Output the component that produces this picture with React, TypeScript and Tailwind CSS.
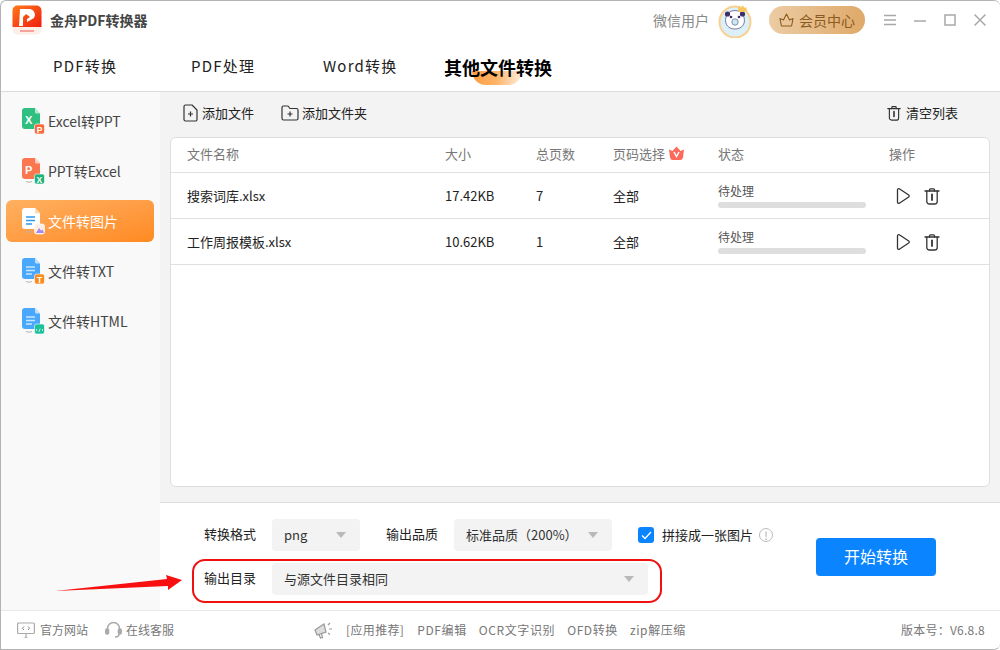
import React from "react";

const F = { fontFamily: '"Microsoft YaHei","Noto Sans CJK SC","Liberation Sans",sans-serif' };

function Logo() {
  return (
    <svg width="30" height="30" viewBox="0 0 30 30" className="shrink-0">
      <defs>
        <linearGradient id="lg" x1="0" y1="0" x2="1" y2="1">
          <stop offset="0" stopColor="#ff7a1a" />
          <stop offset="1" stopColor="#f01c10" />
        </linearGradient>
      </defs>
      <rect x="0.5" y="0.5" width="29" height="29" rx="5" fill="#fdeee8" />
      <path d="M0.5 5.5a5 5 0 0 1 5-5h19a5 5 0 0 1 5 5V22H0.5z" fill="url(#lg)" />
      <path d="M8 4h9a5.8 5.8 0 0 1 5 9l-7 4v-3l3-2-4-3-3 3v9H7z" fill="#fff" />
      <rect x="8" y="25" width="14" height="2" fill="#f4a49a" />
    </svg>
  );
}

function Avatar() {
  return (
    <svg width="36" height="36" viewBox="0 0 36 36" className="shrink-0">
      <circle cx="17" cy="20" r="15.5" fill="#dcf0fa" stroke="#fbcf8e" strokeWidth="2" />
      <path d="M8 15a9.5 9.5 0 0 1 18 0c2 8-3 12-9 12s-11-4-9-12z" fill="#fff" stroke="#5b5a8a" strokeWidth="0.8" />
      <circle cx="9.5" cy="12" r="2.6" fill="#3c2f6a" />
      <circle cx="24.5" cy="12" r="2.6" fill="#3c2f6a" />
      <circle cx="13" cy="15" r="1.3" fill="#3c2f6a" />
      <circle cx="21" cy="15" r="1.3" fill="#3c2f6a" />
      <circle cx="17" cy="20" r="3.2" fill="#cfe6f2" stroke="#6a7a9a" strokeWidth="0.8" />
      <path d="M20 7l1-3 2 2 2-3 1 3 2-1 1 3-3 2h-5z" fill="#f8c65a" />
    </svg>
  );
}

function DocBase({ color, children, shadow = true }: { color: string; children?: React.ReactNode; shadow?: boolean }) {
  return (
    <>
      <path d="M3 0h10l5 5.5V18a3 3 0 0 1-3 3H3a3 3 0 0 1-3-3V3a3 3 0 0 1 3-3z" fill={color} />
      <path d="M13 0l5 5.5h-3.5a1.5 1.5 0 0 1-1.5-1.5z" fill="#ffffff" fillOpacity="0.65" />
      {shadow && <path d="M4 23.5q3 1.5 6 0" stroke="#b5b5b5" strokeWidth="1" fill="none" />}
      {children}
    </>
  );
}

function Badge({ color, children }: { color: string; children?: React.ReactNode }) {
  return (
    <>
      <rect x="12.5" y="16" width="10" height="10" rx="2" fill={color} stroke="#fff" strokeWidth="0.6" />
      {children}
    </>
  );
}

function SideIcon({ kind }: { kind: number }) {
  const lines = (c: string) => (
    <path d={`M4 9h9M4 12.5h9M4 16h6`} stroke={c} strokeWidth="1.3" fill="none" />
  );
  return (
    <svg width="24" height="27" viewBox="0 0 24 27" className="shrink-0">
      {kind === 0 && (
        <>
          <DocBase color="#2fbf80" shadow={false}>
            <text x="3" y="15.5" fontSize="11" fontWeight="700" fill="#fff" fontFamily="Liberation Sans">X</text>
          </DocBase>
          <Badge color="#f9683a">
            <text x="14.7" y="24.6" fontSize="8.5" fontWeight="700" fill="#fff" fontFamily="Liberation Sans">P</text>
          </Badge>
        </>
      )}
      {kind === 1 && (
        <>
          <DocBase color="#fb774f">
            <text x="3" y="15.5" fontSize="11" fontWeight="700" fill="#fff" fontFamily="Liberation Sans">P</text>
          </DocBase>
          <Badge color="#1fb37c">
            <text x="14.6" y="24.6" fontSize="8.5" fontWeight="700" fill="#fff" fontFamily="Liberation Sans">X</text>
          </Badge>
        </>
      )}
      {kind === 2 && (
        <>
          <DocBase color="#ffffff">{lines("#2a9bf5")}</DocBase>
          <path d="M13 0l5 5.5h-3.5a1.5 1.5 0 0 1-1.5-1.5z" fill="#ffd9b0" />
          <Badge color="#fbeee6">
            <path d="M14 25l3-5 2 2.5 1.5-1 1.5 3.5z" fill="#a888ee" />
          </Badge>
        </>
      )}
      {kind === 3 && (
        <>
          <DocBase color="#49a8fb">{lines("#c9e5ff")}</DocBase>
          <Badge color="#f98b1f">
            <text x="14.9" y="24.6" fontSize="8.5" fontWeight="700" fill="#fff" fontFamily="Liberation Sans">T</text>
          </Badge>
        </>
      )}
      {kind === 4 && (
        <>
          <DocBase color="#49a8fb">{lines("#c9e5ff")}</DocBase>
          <Badge color="#1cc09b">
            <path d="M15 21l-1 1 1 1M20 21l1 1-1 1M18.2 20.5l-1.4 3.5" stroke="#fff" strokeWidth="0.7" fill="none" />
          </Badge>
        </>
      )}
    </svg>
  );
}

function Trash({ size = 18, color = "#333" }: { size?: number; color?: string }) {
  return (
    <svg width={size} height={size} viewBox="0 0 18 18" fill="none" stroke={color} strokeWidth="1.3" strokeLinecap="round" strokeLinejoin="round">
      <path d="M2 4h14" />
      <path d="M6.5 4V2.8a1 1 0 0 1 1-1h3a1 1 0 0 1 1 1V4" />
      <path d="M3.8 4v10.5a2.5 2.5 0 0 0 2.5 2.5h5.4a2.5 2.5 0 0 0 2.5-2.5V4" />
      <path d="M9 7.5v5.5" strokeWidth="1.8" />
    </svg>
  );
}

function Play() {
  return (
    <svg width="16" height="18" viewBox="0 0 16 18" fill="none" stroke="#333" strokeWidth="1.3" strokeLinejoin="round">
      <path d="M2.5 2.8c0-1 1-1.5 1.800-1l9.400 6.200c.7.500.7 1.500 0 2l-9.400 6.200c-.8.500-1.800 0-1.800-1z" />
    </svg>
  );
}

function Caret() {
  return <span className="w-0 h-0 border-l-[5px] border-r-[5px] border-t-[6px] border-l-transparent border-r-transparent border-t-[#b9b9b9]" />;
}

function Tab({ label, w, active }: { label: string; w: string; active?: boolean }) {
  return (
    <div className={`relative flex items-center pb-[3px] ${w}`}>
      {active && <span className="absolute left-[28px] top-[26px] w-[50px] h-[14px] rounded-b-full bg-gradient-to-r from-[#ff9c3e] via-[#ffb469] to-[#ffeedd]" />}
      <span className={active ? "relative text-[18px] font-bold text-black leading-none" : "text-[15px] text-[#222] tracking-[1.2px]"}>{label}</span>
    </div>
  );
}

function SideItem({ kind, label, active }: { kind: number; label: string; active?: boolean }) {
  return (
    <div className={`flex items-center h-[42px] rounded-[6px] pl-[16px] gap-[1px] ${active ? "bg-gradient-to-br from-[#ffb060] to-[#ff8a1e] text-white" : "text-[#444]"}`}>
      <SideIcon kind={kind} />
      <span className="text-[14px] leading-none ml-[1px]">{label}</span>
    </div>
  );
}

function Row({ name, size, pages }: { name: string; size: string; pages: string }) {
  return (
    <div className="flex items-center h-[46px] border-b border-[#e0e0e0] text-[13px] text-[#222]">
      <div className="w-[274px] pl-[16px]">{name}</div>
      <div className="w-[91px]">{size}</div>
      <div className="w-[77px]">{pages}</div>
      <div className="w-[105px]">全部</div>
      <div className="w-[171px]">
        <div className="text-[12px] leading-[16px] text-[#555]">待处理</div>
        <div className="mt-[3px] w-[148px] h-[6px] rounded-full bg-[#dedede]" />
      </div>
      <div className="flex items-center gap-[12px] pl-[6px]">
        <Play />
        <Trash />
      </div>
    </div>
  );
}

export default function App() {
  return (
    <div style={F} className="w-[1000px] h-[650px] overflow-hidden bg-white flex flex-col border border-[#b4b4b4] border-r-0 rounded-t-[6px] rounded-br-[6px]">
      {/* title bar */}
      <div className="h-[44px] shrink-0 flex items-center pl-[11px] pr-[14px] pb-[6px]">
        <Logo />
        <span className="ml-[8px] text-[14px] font-bold text-[#444]">金舟PDF转换器</span>
        <span className="ml-auto text-[14px] text-[#888]">微信用户</span>
        <span className="ml-[9px]"><Avatar /></span>
        <div className="ml-[15px] flex items-center justify-center gap-[5px] w-[96px] h-[28px] rounded-full bg-gradient-to-r from-[#eccca4] to-[#dfa968] text-[14px] text-[#8a5a1e]">
          <svg width="15" height="14" viewBox="0 0 15 14" fill="none" stroke="#8a5a1e" strokeWidth="1.1" strokeLinejoin="round">
            <path d="M1 5.5l3.5 1.5L7.5 1l3 6L14 5.5l-1.2 6.5a1 1 0 0 1-1 1H3.2a1 1 0 0 1-1-1z" />
          </svg>
          会员中心
        </div>
        <div className="ml-[19px] flex items-center gap-[18px]">
          <svg width="12" height="12" viewBox="0 0 12 12" stroke="#a8a8a8" strokeWidth="1.5"><path d="M0 1.5h12M0 6h12M0 10.5h12" /></svg>
          <svg width="12" height="12" viewBox="0 0 12 12" stroke="#a8a8a8" strokeWidth="1.5"><path d="M0 7h12" /></svg>
          <svg width="12" height="12" viewBox="0 0 12 12" fill="none" stroke="#a8a8a8" strokeWidth="1.5"><rect x="1" y="1" width="10" height="10" /></svg>
          <svg width="12" height="12" viewBox="0 0 12 12" stroke="#a8a8a8" strokeWidth="1.5"><path d="M0.5 0.5l11 11M11.5 0.5l-11 11" /></svg>
        </div>
      </div>
      {/* tabs */}
      <div className="h-[47px] shrink-0 flex pl-[52px] border-b border-[#dcdcdc]">
        <Tab label="PDF转换" w="w-[138px]" />
        <Tab label="PDF处理" w="w-[132px]" />
        <Tab label="Word转换" w="w-[121px]" />
        <Tab label="其他文件转换" w="w-[130px]" active />
      </div>
      {/* middle */}
      <div className="flex-1 min-h-0 flex">
        <div className="w-[159px] shrink-0 bg-[#f9f9f9] pt-[8px] pl-[5px] pr-[6px] flex flex-col gap-[8px]">
          <SideItem kind={0} label="Excel转PPT" />
          <SideItem kind={1} label="PPT转Excel" />
          <SideItem kind={2} label="文件转图片" active />
          <SideItem kind={3} label="文件转TXT" />
          <SideItem kind={4} label="文件转HTML" />
        </div>
        <div className="flex-1 min-w-0 flex flex-col bg-[#f3f3f3]">
          {/* toolbar */}
          <div className="h-[45px] shrink-0 flex items-center pl-[23px] pr-[42px] pb-[3px] text-[13px] text-[#222]">
            <span className="flex items-center gap-[4px]">
              <svg width="15" height="18" viewBox="0 0 15 18" fill="none" stroke="#333" strokeWidth="1.2" strokeLinejoin="round">
                <path d="M2.500 1h6.500l5 5v9.500a1.500 1.500 0 0 1-1.500 1.500h-10a1.500 1.500 0 0 1-1.500-1.500V2.500a1.500 1.500 0 0 1 1.500-1.500z" />
                <path d="M5 10h5M7.500 7.500v5" />
              </svg>
              添加文件
            </span>
            <span className="ml-[27px] flex items-center gap-[3px]">
              <svg width="18" height="16" viewBox="0 0 18 16" fill="none" stroke="#333" strokeWidth="1.2" strokeLinejoin="round">
                <path d="M1 2.500a1.500 1.500 0 0 1 1.500-1.500H7l2 2.500h6.500a1.500 1.500 0 0 1 1.500 1.500v8.500a1.500 1.500 0 0 1-1.500 1.500h-13a1.500 1.500 0 0 1-1.500-1.500z" />
                <path d="M6.500 9h5M9 6.500v5" />
              </svg>
              添加文件夹
            </span>
            <span className="ml-auto flex items-center gap-[4px]">
              <Trash size={16} />
              清空列表
            </span>
          </div>
          {/* table */}
          <div className="mx-[10px] h-[350px] shrink-0 bg-white border border-[#dedede] rounded-[6px] overflow-hidden">
            <div className="flex items-center h-[35px] pb-[3px] border-b border-[#e0e0e0] text-[13px] text-[#777]">
              <div className="w-[274px] pl-[16px]">文件名称</div>
              <div className="w-[91px]">大小</div>
              <div className="w-[77px]">总页数</div>
              <div className="w-[105px] flex items-center gap-[3px]">
                页码选择
                <svg width="17" height="15" viewBox="0 0 17 15">
                  <path d="M1 3.500l3.500 1.500L8.500 0.500l4 4.500L16 3.500l-1 8a3 3 0 0 1-3 2.500H5a3 3 0 0 1-3-2.500z" fill="#fb6a5a" />
                  <path d="M6 6l2.500 4.500L11 6" stroke="#fff" strokeWidth="1.500" fill="none" />
                </svg>
              </div>
              <div className="w-[171px]">状态</div>
              <div>操作</div>
            </div>
            <Row name="搜索词库.xlsx" size="17.42KB" pages="7" />
            <Row name="工作周报模板.xlsx" size="10.62KB" pages="1" />
          </div>
          <div className="flex-1" />
          {/* bottom panel */}
          <div className="h-[108px] shrink-0 bg-white border-t border-[#dcdcdc] flex">
            <div className="relative flex flex-col pl-[32px] pt-[16px] gap-[12px]">
              <div className="flex items-center h-[32px] text-[13px] text-[#222]">
                <span className="w-[80px] pl-[12px] pb-[3px]">转换格式</span>
                <div className="w-[88px] h-[32px] rounded-[4px] bg-[#f3f3f3] flex items-center pl-[12px] pr-[14px] justify-between text-[#333]">
                  png
                  <Caret />
                </div>
                <span className="ml-[26px] w-[68px] pb-[3px]">输出品质</span>
                <div className="w-[158px] h-[32px] rounded-[4px] bg-[#f3f3f3] flex items-center pl-[12px] pr-[14px] justify-between text-[#333]">
                  标准品质（200%）
                  <Caret />
                </div>
                <span className="ml-[26px] w-[16px] h-[16px] rounded-[3px] bg-[#0a84ff] flex items-center justify-center">
                  <svg width="11" height="9" viewBox="0 0 11 9" fill="none" stroke="#fff" strokeWidth="1.300"><path d="M1 4.500l3 3 6-6.500" /></svg>
                </span>
                <span className="ml-[8px]">拼接成一张图片</span>
                <span className="ml-[6px] w-[14px] h-[14px] rounded-full border border-[#bbb] text-[#aaa] text-[11px] leading-none flex items-center justify-center">!</span>
              </div>
              <div className="relative flex items-center h-[32px] text-[13px] text-[#222]">
                <span className="w-[80px] pl-[12px] pb-[3px]">输出目录</span>
                <div className="w-[376px] h-[32px] rounded-[4px] bg-[#f3f3f3] flex items-center pl-[12px] pr-[14px] justify-between text-[#333]">
                  与源文件目录相同
                  <Caret />
                </div>
                <span className="absolute left-0 top-[-4px] w-[470px] h-[44px] rounded-[13px] border-[2.5px] border-[#f01010]" />
              </div>
              <svg className="absolute left-[-105px] top-[66px]" width="136" height="24" viewBox="0 0 136 24">
                <path d="M0 22L112 10 111 6 127 11 113 21 113 17z" fill="#f81010" />
              </svg>
            </div>
            <div className="ml-auto mr-[64px] mt-[35px] w-[120px] h-[38px] pb-[2px] rounded-[4px] bg-[#0a84ff] text-white text-[16px] flex items-center justify-center">开始转换</div>
          </div>
        </div>
      </div>
      {/* footer */}
      <div className="h-[39px] shrink-0 flex items-center border-t border-[#e8e8e8] pl-[16px] pr-[15px] text-[12px] text-[#777]">
        <svg width="18" height="16" viewBox="0 0 18 16" fill="none" stroke="#aaa" strokeWidth="1.200">
          <rect x="0.600" y="1" width="16.800" height="10.500" rx="1" />
          <path d="M7 16h4M9 11.500V16" />
          <path d="M7 4.500L5.500 6.200 7 8M11 4.500l1.500 1.700L11 8" stroke="#777" strokeWidth="0.900" />
        </svg>
        <span className="ml-[5px]">官方网站</span>
        <svg className="ml-[17px]" width="17" height="18" viewBox="0 0 17 18" fill="none" stroke="#aaa" strokeWidth="1.500">
          <path d="M2.500 9V7.500a6 6 0 0 1 12 0V9" />
          <rect x="0.800" y="8" width="2.800" height="5" rx="1.200" fill="#aaa" />
          <rect x="13.400" y="8" width="2.800" height="5" rx="1.200" fill="#aaa" />
          <path d="M14 13c0 2-2 3-4 3" />
        </svg>
        <span className="ml-[4px]">在线客服</span>
        <svg className="ml-[140px]" width="20" height="18" viewBox="0 0 20 18" fill="none" stroke="#999" strokeWidth="1.200">
          <path d="M1 9l9-6 2 8-9 3z" fill="#ddd" />
          <path d="M5 13.500l1.500 3.500 2-.5-1-3.500" />
          <path d="M14 4l2-2M15 8h3M14 12l2 1.500" />
        </svg>
        <span className="ml-[12px] tracking-[0.35px]">[应用推荐]</span>
        <span className="ml-[13px] tracking-[0.6px]">PDF编辑</span>
        <span className="ml-[12px] tracking-[0.6px]">OCR文字识别</span>
        <span className="ml-[12px] tracking-[0.6px]">OFD转换</span>
        <span className="ml-[12px] tracking-[0.6px]">zip解压缩</span>
        <span className="ml-auto tracking-[0.25px]">版本号：V6.8.8</span>
      </div>
    </div>
  );
}
